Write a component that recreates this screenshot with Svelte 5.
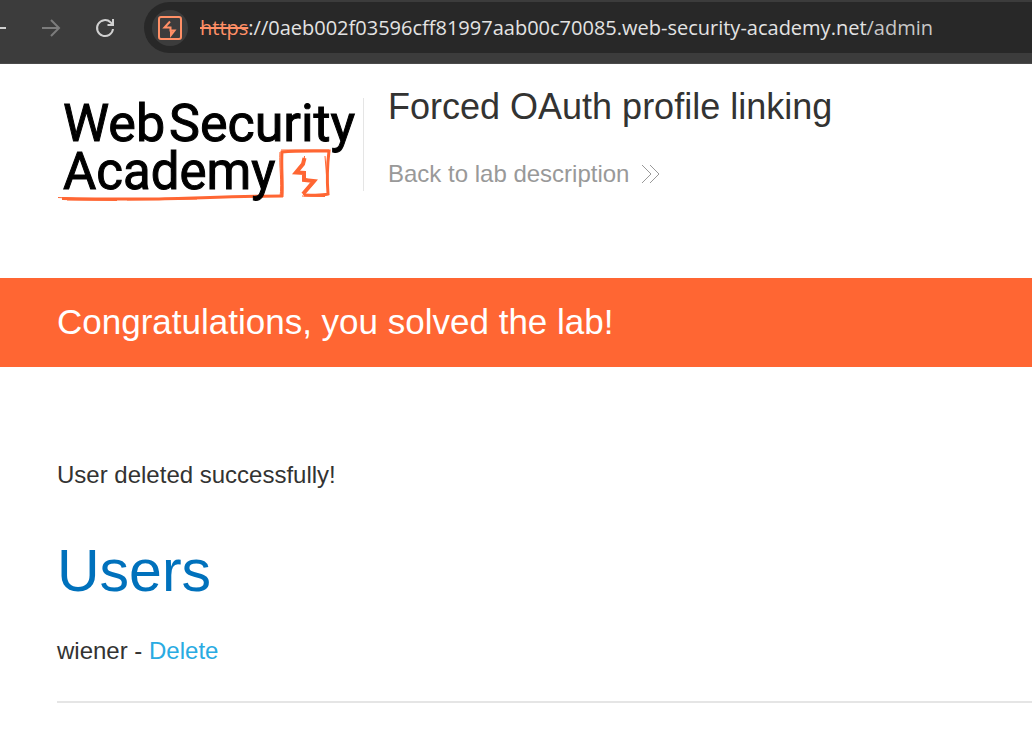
<script>
  const url = {
    scheme: 'https',
    host: '://0aeb002f03596cff81997aab00c70085.web-security-academy.net',
    path: '/admin'
  };
  const title = 'Forced OAuth profile linking';
  let users = $state(['wiener']);

  function remove(event, name) {
    event.preventDefault();
    users = users.filter((u) => u !== name);
  }
</script>

<nav class="toolbar" aria-label="Browser">
  <button class="tool back" aria-label="Back">
    <svg width="24" height="24" viewBox="0 0 24 24"><path d="M21 12H4M12 4l-8 8 8 8" /></svg>
  </button>
  <button class="tool forward" aria-label="Forward" disabled>
    <svg width="24" height="24" viewBox="0 0 24 24"><path d="M3 12H20M12 4l8 8-8 8" /></svg>
  </button>
  <button class="tool reload" aria-label="Reload">
    <svg width="24" height="24" viewBox="0 0 24 24">
      <path d="M20 13A8 8 0 1 1 17.500 6.200L20 9M20 3V9H14.500" />
    </svg>
  </button>
  <div class="address">
    <button class="site" aria-label="View site information">
      <svg width="26" height="26" viewBox="0 0 26 26">
        <rect x="2" y="2" width="22" height="22" rx="2" />
        <path class="mark" d="M13 6.500L7.500 12.500H13.500V15.500H17.500L14 20V16" />
      </svg>
    </button>
    <div class="url" role="textbox" tabindex="0" aria-label="Address" contenteditable="true" spellcheck="false"><span class="scheme">{url.scheme}</span><span>{url.host}</span><span class="path">{url.path}</span></div>
  </div>
</nav>

<header class="lab">
  <svg class="logo" width="306" height="108" viewBox="0 0 306 108" role="img" aria-label="Web Security Academy">
    <path class="line" d="M5 100.500C28 101 60 101 92 101C140 100 190 98 226 98" />
    <path class="fine" d="M1 99.500L28 101M10 102L60 102.500M70 102L140 101" />
    <path class="line" d="M225 99C226 85 224 69 225 54C240 52.500 256 53 272 53C270 69 270 83 271 96C264 98 256 97 247 97" />
    <path class="fine" d="M223 99C225 84 222 68 223 54M224 52L272 52M268 58L271 96M245 98L268 98.500" />
    <path class="bolt" d="M247.500 60L246 66L239 74.500L247 75V82L257 83L246 96" />
    <path class="fine" d="M247.500 58L247 66L237 75L247 75L249 81L259 83L246 97" />
    <text x="6" y="43">Web</text>
    <text x="112" y="43">Security</text>
    <text class="second" x="6" y="91">Academy</text>
  </svg>
  <div class="intro">
    <h2>{title}</h2>
    <a class="backlink" href="#lab">
      Back to lab description
      <svg width="20" height="20" viewBox="0 0 20 20"><path d="M1 1l9 9-9 9M9 1l9 9-9 9" /></svg>
    </a>
  </div>
</header>

<section class="banner" role="status">
  <h4>Congratulations, you solved the lab!</h4>
</section>

<main>
  <p>User deleted successfully!</p>
  <section>
    <h1>Users</h1>
    {#each users as name}
      <div class="user">
        <span>{name} - </span>
        <a href="#delete" onclick={(e) => remove(e, name)}>Delete</a>
      </div>
    {/each}
  </section>
  <hr />
</main>

<style>
  :global(body) {
    background: #fff;
    color: #333332;
    font-family: "Liberation Sans", Arial, sans-serif;
    font-size: 24px;
    line-height: 32px;
    overflow-x: hidden;
  }

  svg {
    fill: none;
    flex: none;
  }

  button {
    border: 0;
    padding: 0;
    background: none;
    display: grid;
    place-items: center;
  }

  .toolbar {
    display: flex;
    align-items: center;
    background: #3c3c3c;
    border-bottom: 1px solid #4a4a4a;
    box-sizing: border-box;
    height: 64px;
    padding-bottom: 8px;
  }

  .tool {
    flex: none;
    width: 54px;
    height: 40px;
    color: #d0d0d0;
  }

  .tool svg {
    stroke: currentColor;
    stroke-width: 2;
  }

  .back {
    margin-left: -30px;
  }

  .forward {
    color: #7c7c7c;
  }

  .address {
    flex: 1;
    min-width: 0;
    display: flex;
    align-items: center;
    gap: 12px;
    height: 51px;
    margin-left: 12px;
    padding-left: 8px;
    border-radius: 26px 0 0 26px;
    background: #282828;
  }

  .site {
    flex: none;
    width: 36px;
    height: 36px;
    border-radius: 50%;
    background: #3c3c3c;
  }

  .site svg {
    stroke: #ff8f66;
    stroke-width: 2;
  }

  .url {
    font-family: "Open Sans", "Segoe UI", sans-serif;
    font-size: 20px;
    line-height: 32px;
    white-space: nowrap;
    color: #e3e3e3;
    outline: 0;
  }

  .scheme {
    color: #ff8f66;
    text-decoration: line-through;
  }

  .path {
    color: #c7c7c7;
  }

  .lab {
    display: flex;
    align-items: flex-start;
    padding: 34px 57px 72px;
  }

  .logo {
    overflow: visible;
  }

  .logo text {
    font: 400 52px Roboto, sans-serif;
    fill: #000;
    stroke: #000;
    stroke-width: 1;
  }

  .logo .second {
    font-size: 51px;
  }

  .line {
    stroke: #ff6633;
    stroke-width: 3;
  }

  .bolt {
    stroke: #ff6633;
    stroke-width: 4;
  }

  .fine {
    stroke: #ff6633;
    stroke-width: 1;
  }

  .intro {
    border-left: 1px solid #e5e5e5;
    padding-left: 24px;
    height: 93px;
  }

  h1,
  h2,
  h4 {
    margin: 0;
    font-weight: 400;
  }

  h2 {
    margin-top: -11px;
    font-size: 36px;
    line-height: 40px;
  }

  .backlink {
    display: flex;
    align-items: center;
    gap: 12px;
    margin-top: 31px;
    color: #999;
    text-decoration: none;
  }

  .backlink svg {
    stroke: #999;
    stroke-width: 1;
  }

  .banner {
    background: #ff6633;
    color: #fff;
    padding: 23px 57px 25px;
  }

  h4 {
    font-size: 35px;
    line-height: 41px;
  }

  main {
    padding: 92px 0 48px 57px;
  }

  p {
    margin: 0 0 40px;
  }

  h1 {
    color: #0071bc;
    font-size: 59px;
    line-height: 80px;
    margin-bottom: 24px;
  }

  .user a {
    color: #29abe2;
    text-decoration: none;
  }

  hr {
    margin: 34px 0 0;
    border: 0;
    border-top: 2px solid #e5e5e5;
  }
</style>
